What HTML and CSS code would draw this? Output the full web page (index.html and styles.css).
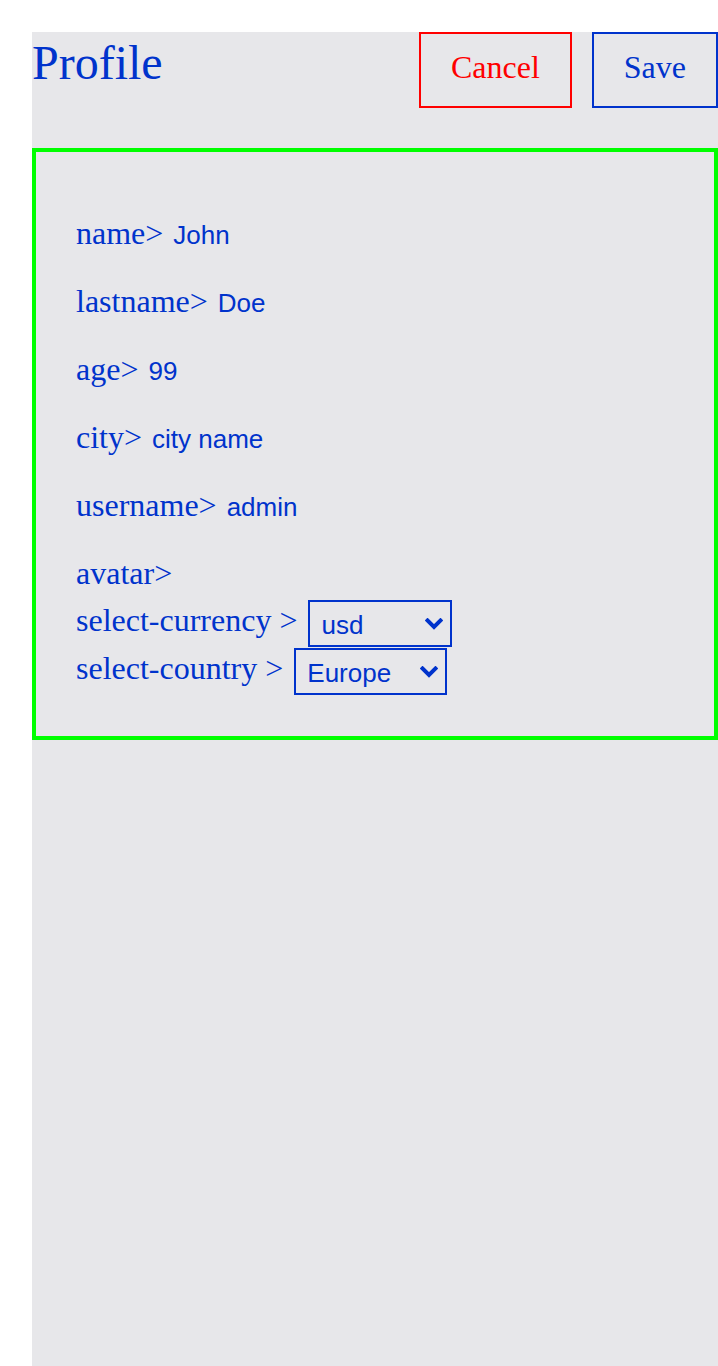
FILE: index.html
```html
<!DOCTYPE html>
<html>
<head>
<meta charset="utf-8">
<link rel="stylesheet" href="styles.css">
</head>
<body>
<div class="app">
  <header class="header">
    <h1 class="title">Profile</h1>
    <div class="actions">
      <button class="btn btn-cancel">Cancel</button>
      <button class="btn btn-save">Save</button>
    </div>
  </header>
  <section class="card">
    <div class="row"><span class="label">name&gt;</span><span class="value">John</span></div>
    <div class="row"><span class="label">lastname&gt;</span><span class="value">Doe</span></div>
    <div class="row"><span class="label">age&gt;</span><span class="value">99</span></div>
    <div class="row"><span class="label">city&gt;</span><span class="value">city name</span></div>
    <div class="row"><span class="label">username&gt;</span><span class="value">admin</span></div>
    <div class="row row-avatar"><span class="label">avatar&gt;</span></div>
    <div class="select-row"><span class="label">select-currency &gt;</span>
      <span class="select-wrap">
        <select class="select sel-currency"><option>usd</option><option>eur</option></select>
        <svg class="chevron" width="18" height="12" viewBox="0 0 18 12"><polyline points="2.5,2.5 9,9 15.5,2.5" fill="none" stroke="#0033cc" stroke-width="4" stroke-linecap="square"/></svg>
      </span>
    </div>
    <div class="select-row"><span class="label">select-country &gt;</span>
      <span class="select-wrap">
        <select class="select sel-country"><option>Europe</option><option>Asia</option></select>
        <svg class="chevron" width="18" height="12" viewBox="0 0 18 12"><polyline points="2.5,2.5 9,9 15.5,2.5" fill="none" stroke="#0033cc" stroke-width="4" stroke-linecap="square"/></svg>
      </span>
    </div>
  </section>
</div>
</body>
</html>
```

FILE: styles.css
```css
html, body {
  margin: 0;
  background: #ffffff;
}
body {
  padding: 32px 0 0 32px;
  font-family: "Liberation Serif", "Times New Roman", serif;
  color: #0033cc;
}
.app {
  background: #e7e7ea;
  min-height: calc(100vh - 32px);
}
.header {
  display: flex;
  align-items: flex-start;
}
.title {
  margin: 3px 0 0 0;
  font-size: 48px;
  font-weight: normal;
  line-height: normal;
}
.actions {
  margin-left: auto;
  display: flex;
  gap: 20px;
}
.btn {
  height: 76px;
  padding: 0 30px 6px 30px;
  background: transparent;
  border: 2px solid #0033cc;
  font-family: "Liberation Serif", "Times New Roman", serif;
  font-size: 32px;
  color: #0033cc;
  cursor: pointer;
}
.btn-cancel {
  border-color: #ff0000;
  color: #ff0000;
}
.card {
  margin-top: 40px;
  border: 4px solid #00ff00;
  padding: 63px 40px 40px 40px;
  display: flex;
  flex-direction: column;
}
.row {
  display: flex;
  align-items: baseline;
  height: 36px;
  margin-bottom: 32px;
}
.row-avatar {
  margin-bottom: 9px;
}
.label {
  font-size: 32px;
  line-height: 36px;
}
.value {
  margin-left: 10px;
  font-family: "Liberation Sans", Arial, sans-serif;
  font-size: 26px;
}
.select-row {
  display: flex;
  align-items: flex-start;
  height: 47px;
  margin-bottom: 1px;
}
.select-row .label {
  margin-top: 2px;
}
.select-wrap {
  position: relative;
  display: inline-flex;
  margin-left: 11px;
}
.select {
  -webkit-appearance: none;
  appearance: none;
  height: 47px;
  border: 2px solid #0033cc;
  border-radius: 0;
  background: transparent;
  color: #0033cc;
  font-family: "Liberation Sans", Arial, sans-serif;
  font-size: 26px;
  padding: 3px 30px 0 11px;
  margin: 0;
}
.chevron {
  position: absolute;
  right: 9px;
  top: 18px;
  pointer-events: none;
}
.sel-currency {
  width: 144px;
}
.sel-country {
  width: 153px;
}
```
